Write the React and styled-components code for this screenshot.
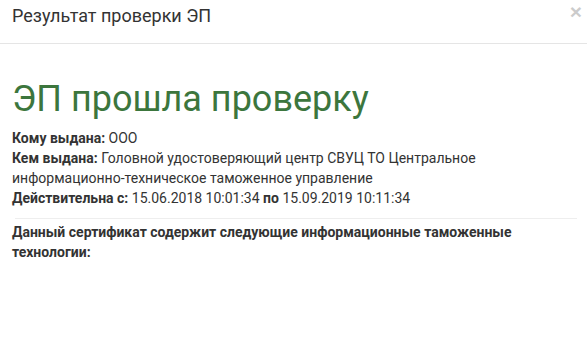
import React from 'react';
import styled, { createGlobalStyle } from 'styled-components';

const GlobalStyle = createGlobalStyle`
    html, body {
        margin: 0;
        padding: 0;
        background: #fff;
    }
    body {
        font-family: Roboto, 'Liberation Sans', sans-serif;
        color: #333;
    }
`;

const Modal = styled.div`
    width: 587px;
    height: 351px;
    background: #fff;
    box-sizing: border-box;
`;

const Header = styled.div`
    display: flex;
    align-items: flex-start;
    justify-content: space-between;
    height: 44px;
    box-sizing: border-box;
    padding: 3px 5px 0 12px;
    border-bottom: 1px solid #e5e5e5;
`;

const Title = styled.h4`
    margin: 0;
    font-size: 18px;
    font-weight: 400;
    line-height: 26px;
    color: #333;
`;

const Close = styled.button`
    border: 0;
    background: transparent;
    padding: 0;
    margin-top: -1px;
    font-family: 'Liberation Sans', sans-serif;
    font-size: 21px;
    font-weight: 700;
    line-height: 20px;
    color: #000;
    opacity: 0.2;
    cursor: pointer;
`;

const Body = styled.div`
    padding: 35px 10px 0 12px;
`;

const Status = styled.h1`
    margin: 0 0 9px;
    font-size: 36px;
    font-weight: 400;
    line-height: 40px;
    color: ${props => (props.ok ? '#3c763d' : '#a94442')};
`;

const Line = styled.div`
    font-size: 14px;
    line-height: 20px;
`;

const Label = styled.b`
    font-weight: 700;
`;

const Divider = styled.hr`
    margin: 10px 0 3px 3px;
    border: 0;
    border-top: 1px solid #eee;
`;

const Note = styled.div`
    font-size: 14px;
    font-weight: 700;
    line-height: 20px;
`;

export default function App() {
    return (
        <Modal>
            <GlobalStyle />
            <Header>
                <Title>Результат проверки ЭП</Title>
                <Close>×</Close>
            </Header>
            <Body>
                <Status ok>ЭП прошла проверку</Status>
                <Line><Label>Кому выдана:</Label> ООО</Line>
                <Line>
                    <Label>Кем выдана:</Label> Головной удостоверяющий центр СВУЦ ТО Центральное
                    информационно-техническое таможенное управление
                </Line>
                <Line>
                    <Label>Действительна с:</Label> 15.06.2018 10:01:34 <Label>по</Label> 15.09.2019 10:11:34
                </Line>
                <Divider />
                <Note>Данный сертификат содержит следующие информационные таможенные технологии:</Note>
            </Body>
        </Modal>
    );
}
